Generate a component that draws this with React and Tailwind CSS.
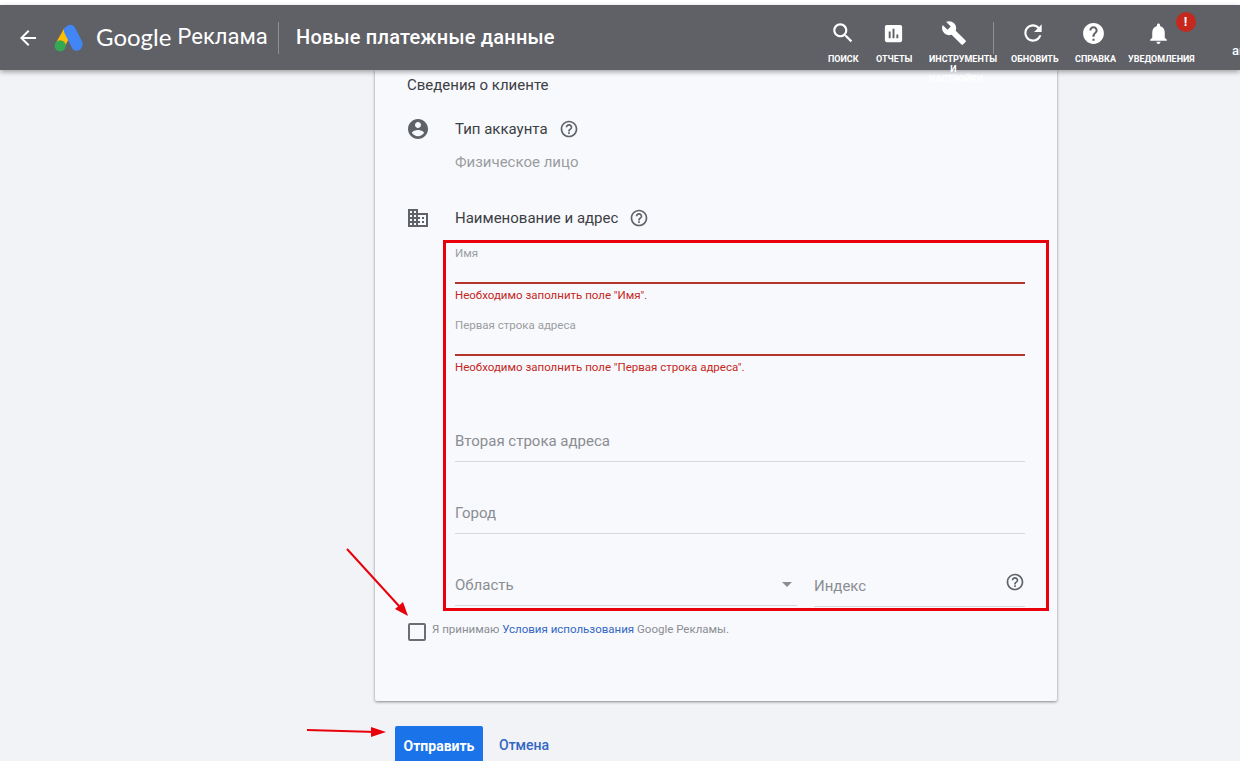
const paths = {
  back: 'M20 11H7.83l5.59-5.59L12 4l-8 8 8 8 1.41-1.41L7.83 13H20v-2z',
  search: 'M15.5 14h-.79l-.28-.27C15.41 12.59 16 11.11 16 9.5 16 5.91 13.09 3 9.5 3S3 5.91 3 9.5 5.91 16 9.5 16c1.61 0 3.09-.59 4.23-1.57l.27.28v.79l5 4.99L20.49 19l-4.99-5zm-6 0C7.01 14 5 11.99 5 9.5S7.01 5 9.5 5 14 7.01 14 9.5 11.99 14 9.5 14z',
  reports: 'M19 3H5c-1.1 0-2 .9-2 2v14c0 1.1.9 2 2 2h14c1.1 0 2-.9 2-2V5c0-1.1-.9-2-2-2zM9 17H7v-7h2v7zm4 0h-2V7h2v10zm4 0h-2v-4h2v4z',
  tools: 'M22.7 19l-9.1-9.1c.9-2.3.4-5-1.5-6.9-2-2-5-2.4-7.4-1.3L9 6 6 9 1.6 4.7C.4 7.1.9 10.1 2.9 12.1c1.9 1.9 4.6 2.4 6.9 1.5l9.1 9.1c.4.4 1 .4 1.4 0l2.3-2.3c.5-.4.5-1.1.1-1.4z',
  refresh: 'M17.65 6.35C16.2 4.9 14.21 4 12 4c-4.42 0-7.99 3.58-7.99 8s3.57 8 7.99 8c3.73 0 6.84-2.55 7.73-6h-2.08c-.82 2.33-3.04 4-5.65 4-3.31 0-6-2.69-6-6s2.69-6 6-6c1.66 0 3.14.69 4.22 1.78L13 11h7V4l-2.35 2.35z',
  help: 'M12 2C6.48 2 2 6.48 2 12s4.48 10 10 10 10-4.48 10-10S17.52 2 12 2zm1 17h-2v-2h2v2zm2.07-7.75l-.9.92C13.45 12.9 13 13.5 13 15h-2v-.5c0-1.1.45-2.1 1.17-2.83l1.24-1.26c.37-.36.59-.86.59-1.41 0-1.1-.9-2-2-2s-2 .9-2 2H8c0-2.21 1.79-4 4-4s4 1.79 4 4c0 .88-.36 1.68-.93 2.25z',
  bell: 'M12 22c1.1 0 2-.9 2-2h-4c0 1.1.9 2 2 2zm6-6v-5c0-3.07-1.63-5.64-4.5-6.32V4c0-.83-.67-1.5-1.5-1.5s-1.5.67-1.5 1.5v.68C7.64 5.36 6 7.92 6 11v5l-2 2v1h16v-1l-2-2z',
  helpOutline: 'M11 18h2v-2h-2v2zm1-16C6.48 2 2 6.48 2 12s4.48 10 10 10 10-4.48 10-10S17.52 2 12 2zm0 18c-4.41 0-8-3.59-8-8s3.59-8 8-8 8 3.59 8 8-3.59 8-8 8zm0-14c-2.21 0-4 1.79-4 4h2c0-1.1.9-2 2-2s2 .9 2 2c0 2-3 1.75-3 5h2c0-2.25 3-2.5 3-5 0-2.21-1.79-4-4-4z',
  account: 'M12 2C6.48 2 2 6.48 2 12s4.48 10 10 10 10-4.48 10-10S17.52 2 12 2zm0 3c1.66 0 3 1.34 3 3s-1.34 3-3 3-3-1.34-3-3 1.34-3 3-3zm0 14.2c-2.5 0-4.71-1.28-6-3.22.03-1.99 4-3.08 6-3.08 1.99 0 5.97 1.09 6 3.08-1.29 1.94-3.5 3.22-6 3.22z',
  domain: 'M12 7V3H2v18h20V7H12zM6 19H4v-2h2v2zm0-4H4v-2h2v2zm0-4H4V9h2v2zm0-4H4V5h2v2zm4 12H8v-2h2v2zm0-4H8v-2h2v2zm0-4H8V9h2v2zm0-4H8V5h2v2zm10 12h-8v-2h2v-2h-2v-2h2v-2h-2V9h8v10zm-2-8h-2v2h2v-2zm0 4h-2v2h2v-2z',
};

const Icon = ({ name, className }) => (
  <svg viewBox="0 0 24 24" fill="currentColor" className={className}>
    <path d={paths[name]} />
  </svg>
);

const AdsLogo = () => (
  <svg viewBox="0 0 29 28" className="w-[29px] h-[28px] shrink-0">
    <path d="M10 4.5 L2.2 18.5 L10.5 23 L17.5 10 Z" fill="#fbbc04" />
    <path d="M14 1.5 C17 0 19.5 1 21 3.5 L28 17.5 C29.5 20.5 28.5 24 25.5 26 C22.5 27.5 19.5 26.5 18 24 L10.5 9 C9 5.8 10.5 3 14 1.5 Z" fill="#4285f4" />
    <circle cx="6.2" cy="21.8" r="5.6" fill="#34a853" />
  </svg>
);

const NavItem = ({ icon, label, iconClass = 'w-[26px] h-[26px]', widthClass, children }) => (
  <div className={`flex flex-col items-center shrink-0 ${widthClass}`}>
    <div className="relative h-[28px] flex items-center justify-center">
      <Icon name={icon} className={`text-white ${iconClass}`} />
      {children}
    </div>
    <div className="mt-[7px] w-full text-center text-[9px] leading-[10px] font-bold uppercase text-white">
      {label}
    </div>
  </div>
);

const Field = ({ label, className = '' }) => (
  <div className={`h-[72px] flex flex-col justify-end ${className}`}>
    <div className="h-[33px] border-b border-[#d6d8de] text-[15px] leading-[24px] text-[#8a8d92]">{label}</div>
  </div>
);

const ErrorField = ({ label, error, className = '' }) => (
  <div className={`h-[72px] ${className}`}>
    <div className="h-[14px] text-[11.5px] leading-[14px] text-[#9a9da0]">{label}</div>
    <div className="h-[24px] border-b-2 border-[#b3372b]" />
    <div className="mt-[4px] text-[11.5px] leading-[14px] text-[#c5281c]">{error}</div>
  </div>
);

const App = () => {
  return (
    <div className="relative w-[1240px] h-[761px] overflow-hidden bg-[#f1f3f6] font-['Roboto',sans-serif]">
      <div className="h-[5px] bg-white" />

      <header className="relative z-10 h-[65px] bg-[#5f6167] shadow-[0_2px_5px_rgba(0,0,0,0.35)] flex items-start text-white">
        <Icon name="back" className="w-[24px] h-[24px] mt-[21px] ml-[16px] shrink-0" />
        <div className="ml-[14px] mt-[19px]"><AdsLogo /></div>
        <div className="ml-[13px] mt-[15px] w-[182px] h-[34px] flex items-center text-[24px] leading-[34px] font-['Lato',sans-serif] whitespace-nowrap">
          Google&nbsp;<span className="font-['Roboto',sans-serif] text-[22px]">Реклама</span>
        </div>
        <div className="mt-[17px] w-px h-[32px] bg-[#8d8f94] shrink-0" />
        <div className="ml-[17px] mt-[15px] text-[20px] leading-[34px] font-medium tracking-[0.2px] whitespace-nowrap">
          Новые платежные данные
        </div>

        <div className="ml-auto flex items-start pt-[14px] pr-[0px] w-[412px]">
          <NavItem icon="search" label="Поиск" widthClass="w-[30px] ml-[0px]" />
          <NavItem icon="reports" label="Отчеты" widthClass="w-[34px] ml-[18px]" iconClass="w-[23px] h-[23px]" />
          <NavItem icon="tools" label={<>Инструменты<br />и<br />настройки</>} widthClass="w-[49px] ml-[19px]" />
          <div className="ml-[15px] mt-[3px] w-px h-[32px] bg-[#8d8f94] shrink-0" />
          <NavItem icon="refresh" label="Обновить" widthClass="w-[44px] ml-[17px]" />
          <NavItem icon="help" label="Справка" widthClass="w-[37px] ml-[20px]" iconClass="w-[25px] h-[25px]" />
          <NavItem icon="bell" label="Уведомления" widthClass="w-[60px] ml-[16px]" iconClass="w-[25px] h-[25px]">
            <span className="absolute left-[30px] -top-[7px] w-[20px] h-[20px] rounded-full bg-[#c5281c] flex items-center justify-center text-[13px] font-bold text-white">!</span>
          </NavItem>
          <div className="ml-[44px] mt-[22px] text-[13px] font-medium whitespace-nowrap">ar</div>
        </div>
      </header>

      <main className="ml-[375px] w-[682px]">
        <div className="h-[631px] bg-[#f8f9fd] rounded-b-[2px] shadow-[0_1px_3px_rgba(60,64,67,0.6)] pt-[5px] pl-[32px]">
          <div className="text-[15px] leading-[20px] text-[#3c4043]">Сведения о клиенте</div>

          <div className="mt-[24px] flex items-center h-[20px]">
            <Icon name="account" className="w-[24px] h-[24px] -ml-[1px] text-[#5f6368] shrink-0" />
            <span className="ml-[25px] text-[15px] text-[#3c4043]">Тип аккаунта</span>
            <Icon name="helpOutline" className="ml-[11px] w-[20px] h-[20px] text-[#5f6368]" />
          </div>
          <div className="mt-[13px] ml-[48px] h-[20px] text-[15px] leading-[20px] text-[#9a9da0]">Физическое лицо</div>

          <div className="mt-[36px] flex items-center h-[20px]">
            <Icon name="domain" className="w-[24px] h-[24px] -ml-[1px] text-[#5f6368] shrink-0" />
            <span className="ml-[25px] text-[15px] text-[#3c4043]">Наименование и адрес</span>
            <Icon name="helpOutline" className="ml-[11px] w-[20px] h-[20px] text-[#5f6368]" />
          </div>

          <section className="mt-[12px] ml-[36px] w-[606px] h-[371px] border-[3px] border-[#e8000b] pt-[3px] pl-[9px] pr-[21px]">
            <ErrorField label="Имя" error={'Необходимо заполнить поле "Имя".'} />
            <ErrorField label="Первая строка адреса" error={'Необходимо заполнить поле "Первая строка адреса".'} />
            <Field label="Вторая строка адреса" />
            <Field label="Город" />
            <div className="flex gap-[17px]">
              <div className="relative w-[342px]">
                <Field label="Область" />
                <span className="absolute right-[5px] top-[48px] w-0 h-0 border-x-[5px] border-x-transparent border-t-[5px] border-t-[#8a8d92]" />
              </div>
              <div className="relative flex-1 pt-[1px]">
                <Field label="Индекс" />
                <Icon name="helpOutline" className="absolute right-0 top-[38px] w-[20px] h-[20px] text-[#5f6368]" />
              </div>
            </div>
          </section>

          <div className="mt-[12px] flex items-center h-[18px]">
            <span className="w-[18px] h-[18px] ml-[1px] rounded-[2px] border-2 border-[#6a6d73] shrink-0" />
            <span className="ml-[6px] -mt-[4px] text-[11.5px] text-[#8a8d92]">
              Я принимаю <a className="text-[#3367c6]">Условия использования</a> Google Рекламы.
            </span>
          </div>
        </div>

        <div className="mt-[25px] ml-[20px] flex items-start">
          <button className="w-[88px] h-[40px] rounded-[2px] bg-[#1a73e8] text-white text-[14px] font-bold">Отправить</button>
          <a className="ml-[16px] mt-[9px] text-[14px] leading-[20px] font-medium text-[#3367c6]">Отмена</a>
        </div>
      </main>

      {/* red annotation arrows */}
      <svg viewBox="0 0 1240 761" className="absolute inset-0 w-[1240px] h-[761px] pointer-events-none z-20">
        <path d="M347 549 L399 606" stroke="#e8000b" strokeWidth="2" fill="none" />
        <path d="M408 616 L395 609 L403 602 Z" fill="#e8000b" />
        <path d="M307 730 L376 732" stroke="#e8000b" strokeWidth="2" fill="none" />
        <path d="M386 732 L371 727 L371 737 Z" fill="#e8000b" />
      </svg>
    </div>
  );
};

export default App;
